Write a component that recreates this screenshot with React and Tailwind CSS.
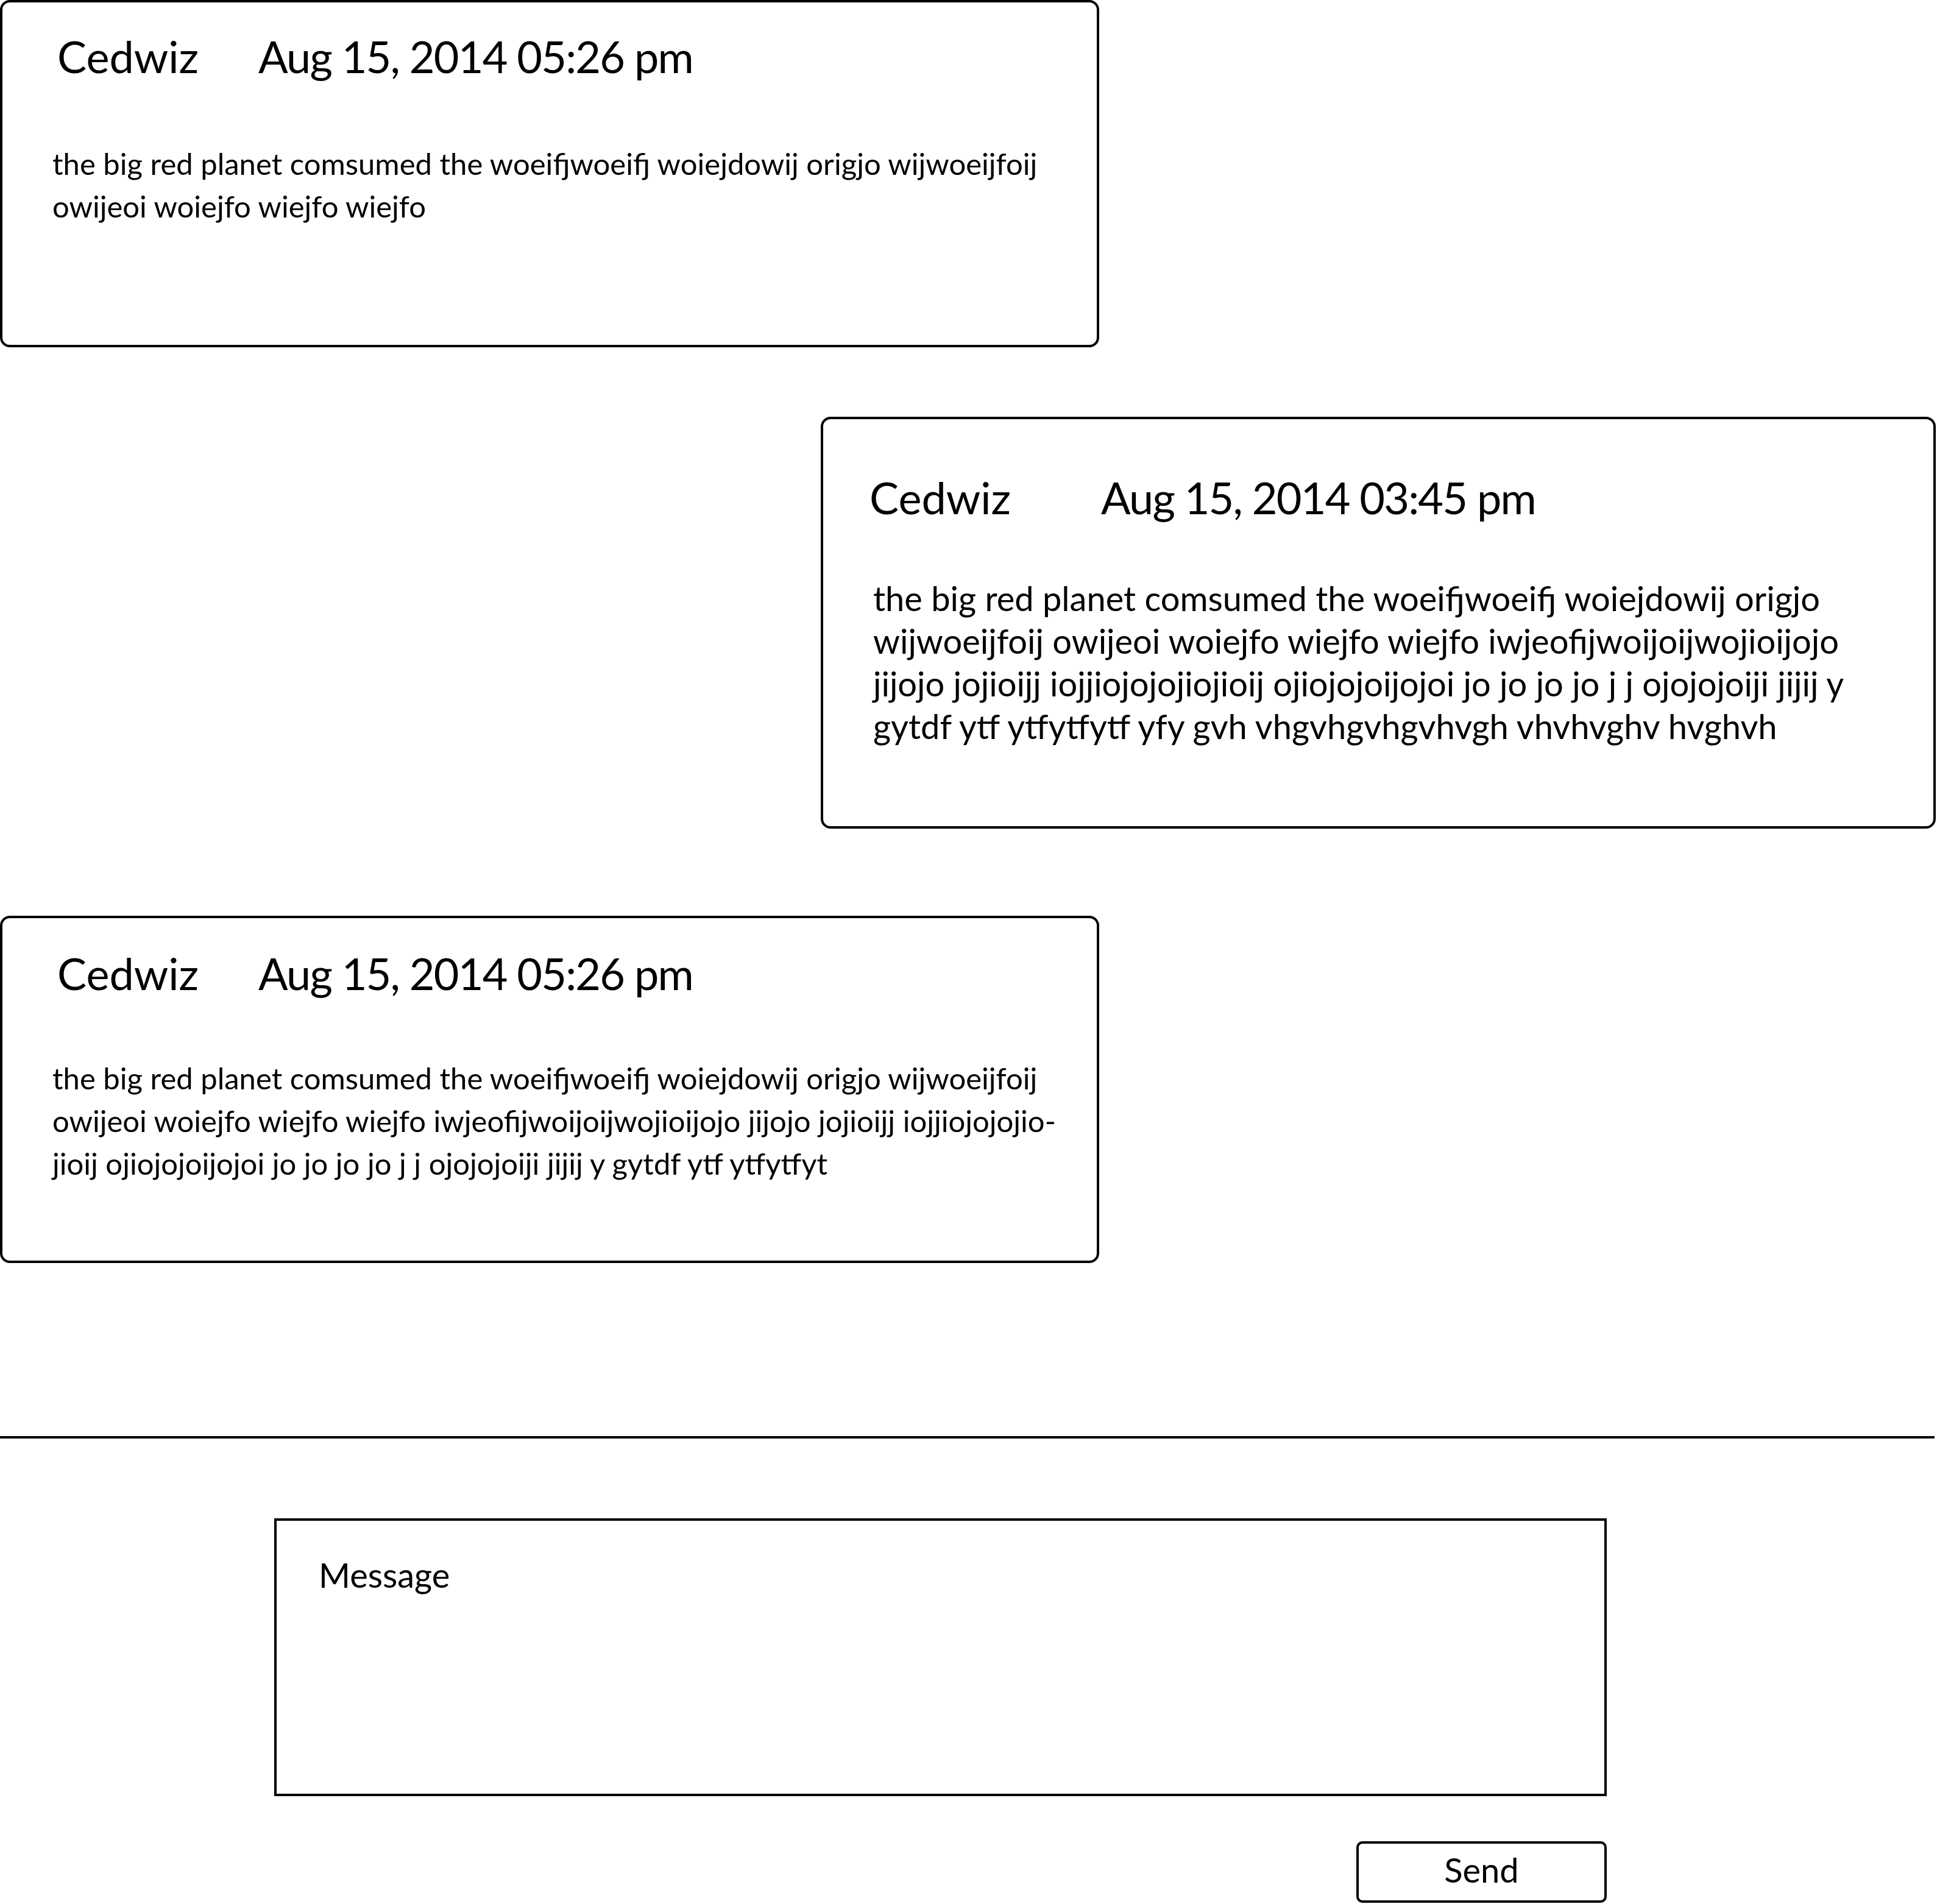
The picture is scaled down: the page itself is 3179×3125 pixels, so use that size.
const messages = [
  {
    name: "Cedwiz",
    time: "Aug 15, 2014 05:26 pm",
    lines: [
      "the big red planet comsumed the woeifjwoeifj woiejdowij origjo wijwoeijfoij",
      "owijeoi woiejfo wiejfo wiejfo",
    ],
  },
  {
    name: "Cedwiz",
    time: "Aug 15, 2014 03:45 pm",
    lines: [
      "the big red planet comsumed the woeifjwoeifj woiejdowij origjo",
      "wijwoeijfoij owijeoi woiejfo wiejfo wiejfo iwjeofijwoijoijwojioijojo",
      "jijojo jojioijj iojjiojojojiojioij ojiojojoijojoi jo jo jo jo j j ojojojoiji jijij y",
      "gytdf ytf ytfytfytf yfy gvh vhgvhgvhgvhvgh vhvhvghv hvghvh",
    ],
  },
  {
    name: "Cedwiz",
    time: "Aug 15, 2014 05:26 pm",
    lines: [
      "the big red planet comsumed the woeifjwoeifj woiejdowij origjo wijwoeijfoij",
      "owijeoi woiejfo wiejfo wiejfo iwjeofijwoijoijwojioijojo jijojo jojioijj iojjiojojojio-",
      "jioij ojiojojoijojoi jo jo jo jo j j ojojojoiji jijij y gytdf ytf ytfytfyt",
    ],
  },
];

function Bubble({ msg, className, headClass, nameClass, bodyClass }) {
  return (
    <div className={`border-4 border-black rounded-[16px] bg-white ${className}`}>
      <div className={`flex text-[72px] leading-[90px] ${headClass}`}>
        <span className={nameClass}>{msg.name}</span>
        <span className="tracking-[-1.8px]">{msg.time}</span>
      </div>
      <p className={`pl-[82px] leading-[70px] whitespace-nowrap ${bodyClass}`}>
        {msg.lines.map((l, i) => (
          <span key={i}>
            {l}
            {i < msg.lines.length - 1 && <br />}
          </span>
        ))}
      </p>
    </div>
  );
}

export default function App() {
  return (
    <div className="w-[3179px] h-[3125px] bg-white text-black flex flex-col font-['Lato',sans-serif] overflow-hidden">
      <Bubble
        msg={messages[0]}
        className="w-[1804px] h-[570px]"
        headClass="pt-[43px] pl-[90px]"
        nameClass="w-[330px]"
        bodyClass="mt-[96px] text-[49px]"
      />
      <Bubble
        msg={messages[1]}
        className="w-[1830px] h-[676px] self-end mr-[2px] mt-[114px]"
        headClass="pt-[83px] pl-[76px]"
        nameClass="w-[380px]"
        bodyClass="mt-[86px] text-[56px]"
      />
      <Bubble
        msg={messages[2]}
        className="w-[1804px] h-[570px] mt-[143px]"
        headClass="pt-[45px] pl-[90px]"
        nameClass="w-[330px]"
        bodyClass="mt-[92px] text-[49px]"
      />

      <div className="mt-[284px] w-[3175px] h-[4px] bg-black" />

      <div className="mt-[131px] ml-[450px] w-[2187px] h-[456px] border-4 border-black pt-[54px] pl-[69px]">
        <p className="text-[56px] leading-[70px]">Message</p>
      </div>

      <button className="mt-[74px] ml-[2226px] w-[411px] h-[101px] border-4 border-black rounded-[10px] flex items-center justify-center text-[56px] leading-none pb-[8px]">
        Send
      </button>
    </div>
  );
}
